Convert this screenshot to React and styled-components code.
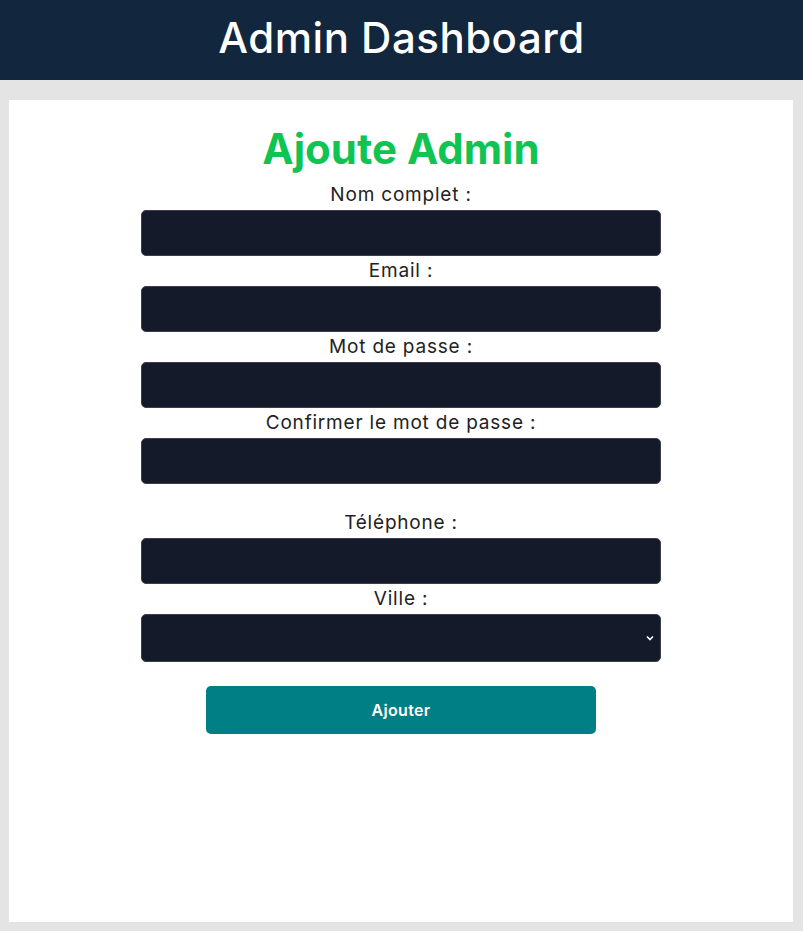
import React from "react";
import styled, { createGlobalStyle } from "styled-components";

const Global = createGlobalStyle`
  html, body { margin: 0; padding: 0; background: #e5e4e4; }
  body { font-family: "Inter", "Noto Sans", sans-serif; }
  * { box-sizing: border-box; }
`;

const Header = styled.header`
  height: 80px;
  background: #12263e;
  display: flex;
  align-items: center;
  justify-content: center;
`;

const HeaderTitle = styled.h1`
  margin: 0;
  color: #fff;
  font-size: 42px;
  font-weight: 500;
  letter-spacing: 0.5px;
  padding-bottom: 6px;
`;

const Main = styled.main`
  padding: 20px 10px 9px 9px;
`;

const Card = styled.section`
  background: #fff;
  height: 822px;
  display: flex;
  flex-direction: column;
  align-items: center;
  padding-top: 22px;
`;

const Title = styled.h2`
  margin: 0 0 4px;
  color: #0fc452;
  font-size: 42px;
  font-weight: 700;
  line-height: 54px;
`;

const Form = styled.form`
  width: 520px;
  display: flex;
  flex-direction: column;
  align-items: center;
`;

const Label = styled.label`
  display: block;
  text-align: center;
  color: #222;
  font-size: 19px;
  letter-spacing: 0.8px;
  line-height: 30px;
  margin-top: ${(p) => (p.$gap ? "24px" : "0")};
`;

const Input = styled.input`
  width: 520px;
  height: 46px;
  background: #141a29;
  border: 1px solid #3a4050;
  border-radius: 5px;
  color: #fff;
  padding: 0 10px;
  display: block;
`;

const SelectWrap = styled.div`
  position: relative;
  width: 520px;
`;

const Select = styled.select`
  width: 520px;
  height: 48px;
  background: #141a29;
  border: 1px solid #3a4050;
  border-radius: 5px;
  color: #fff;
  appearance: none;
  display: block;
`;

const Chevron = styled.svg`
  position: absolute;
  right: 6px;
  top: 20px;
  pointer-events: none;
`;

const Button = styled.button`
  margin-top: 24px;
  width: 390px;
  height: 48px;
  background: #007f84;
  border: none;
  border-radius: 5px;
  color: #fff;
  font-family: inherit;
  font-size: 16px;
  font-weight: 600;
  letter-spacing: 0.3px;
`;

export default function App() {
  return (
    <>
      <Global />
      <Header>
        <HeaderTitle>Admin Dashboard</HeaderTitle>
      </Header>
      <Main>
        <Card>
          <Title>Ajoute Admin</Title>
          <Form onSubmit={(e) => e.preventDefault()}>
            <Label htmlFor="nom">Nom complet :</Label>
            <Input id="nom" type="text" />
            <Label htmlFor="email">Email :</Label>
            <Input id="email" type="email" />
            <Label htmlFor="pwd">Mot de passe :</Label>
            <Input id="pwd" type="password" />
            <Label htmlFor="pwd2">Confirmer le mot de passe :</Label>
            <Input id="pwd2" type="password" />
            <Label htmlFor="tel" $gap>Téléphone :</Label>
            <Input id="tel" type="tel" />
            <Label htmlFor="ville">Ville :</Label>
            <SelectWrap>
              <Select id="ville" defaultValue="">
                <option value=""></option>
              </Select>
              <Chevron width="10" height="8" viewBox="0 0 10 8">
                <path d="M2 2.5 L5 5.5 L8 2.5" fill="none" stroke="#fff" strokeWidth="1.6" />
              </Chevron>
            </SelectWrap>
            <Button type="submit">Ajouter</Button>
          </Form>
        </Card>
      </Main>
    </>
  );
}
